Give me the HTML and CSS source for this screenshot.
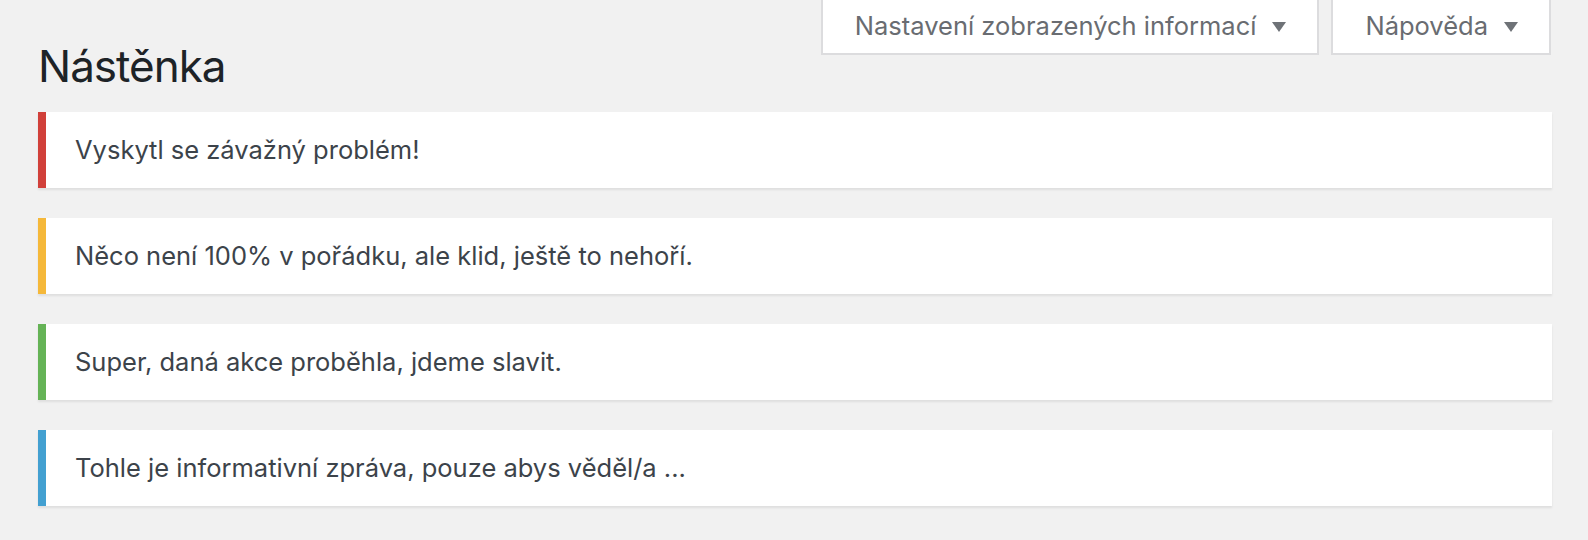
FILE: index.html
```html
<!DOCTYPE html>
<html lang="cs">
<head>
    <meta charset="UTF-8">
    <meta name="viewport" content="width=device-width, initial-scale=1.0">
    <title>Nástěnka</title>
    <link rel="stylesheet" href="styles.css">
</head>
<body>
    <div class="wrap">
        <div class="page-header">
            <h1 class="page-title">Nástěnka</h1>
            <div class="screen-meta-links">
                <button class="meta-toggle">
                    Nastavení zobrazených informací
                    <svg class="caret" width="14" height="10" viewBox="0 0 14 10"><polygon points="0,0 14,0 7,10" /></svg>
                </button>
                <button class="meta-toggle">
                    Nápověda
                    <svg class="caret" width="14" height="10" viewBox="0 0 14 10"><polygon points="0,0 14,0 7,10" /></svg>
                </button>
            </div>
        </div>

        <div class="notice notice-error"><p>Vyskytl se závažný problém!</p></div>
        <div class="notice notice-warning"><p>Něco není 100% v pořádku, ale klid, ještě to nehoří.</p></div>
        <div class="notice notice-success"><p>Super, daná akce proběhla, jdeme slavit.</p></div>
        <div class="notice notice-info"><p>Tohle je informativní zpráva, pouze abys věděl/a ...</p></div>
    </div>
</body>
</html>
```

FILE: styles.css
```css
body {
    margin: 0;
    background-color: #f1f1f1;
    font-family: Inter, "Noto Sans", sans-serif;
    color: #3c434a;
}
.wrap {
    padding: 0 36px 0 38px;
}
.page-header {
    display: flex;
    justify-content: space-between;
    align-items: flex-start;
    margin-bottom: 18px;
}
.page-title {
    margin: 0;
    padding-top: 38px;
    font-size: 44px;
    font-weight: 400;
    letter-spacing: -1px;
    line-height: 56px;
    color: #1d2327;
}
.screen-meta-links {
    display: flex;
    gap: 12px;
    margin-right: 1px;
}
.meta-toggle {
    display: flex;
    align-items: center;
    gap: 16px;
    padding: 8px 31px 9px 32px;
    font-family: inherit;
    font-size: 25.5px;
    line-height: 36px;
    color: #696c71;
    background: #fff;
    border: 2px solid #dcdcde;
    border-top: none;
    cursor: pointer;
}
.caret {
    fill: #6e7277;
    margin-top: 2px;
}
.notice {
    background: #fff;
    border-left: 8px solid #fff;
    box-shadow: 0 2px 2px rgba(0, 0, 0, 0.08);
    margin-bottom: 30px;
    padding: 18px 29px;
}
.notice p {
    margin: 0;
    font-size: 25.5px;
    line-height: 40px;
}
.notice-error {
    border-left-color: #d1403a;
}
.notice-warning {
    border-left-color: #f5b83a;
}
.notice-success {
    border-left-color: #65b356;
}
.notice-info {
    border-left-color: #43a0d1;
}
```
